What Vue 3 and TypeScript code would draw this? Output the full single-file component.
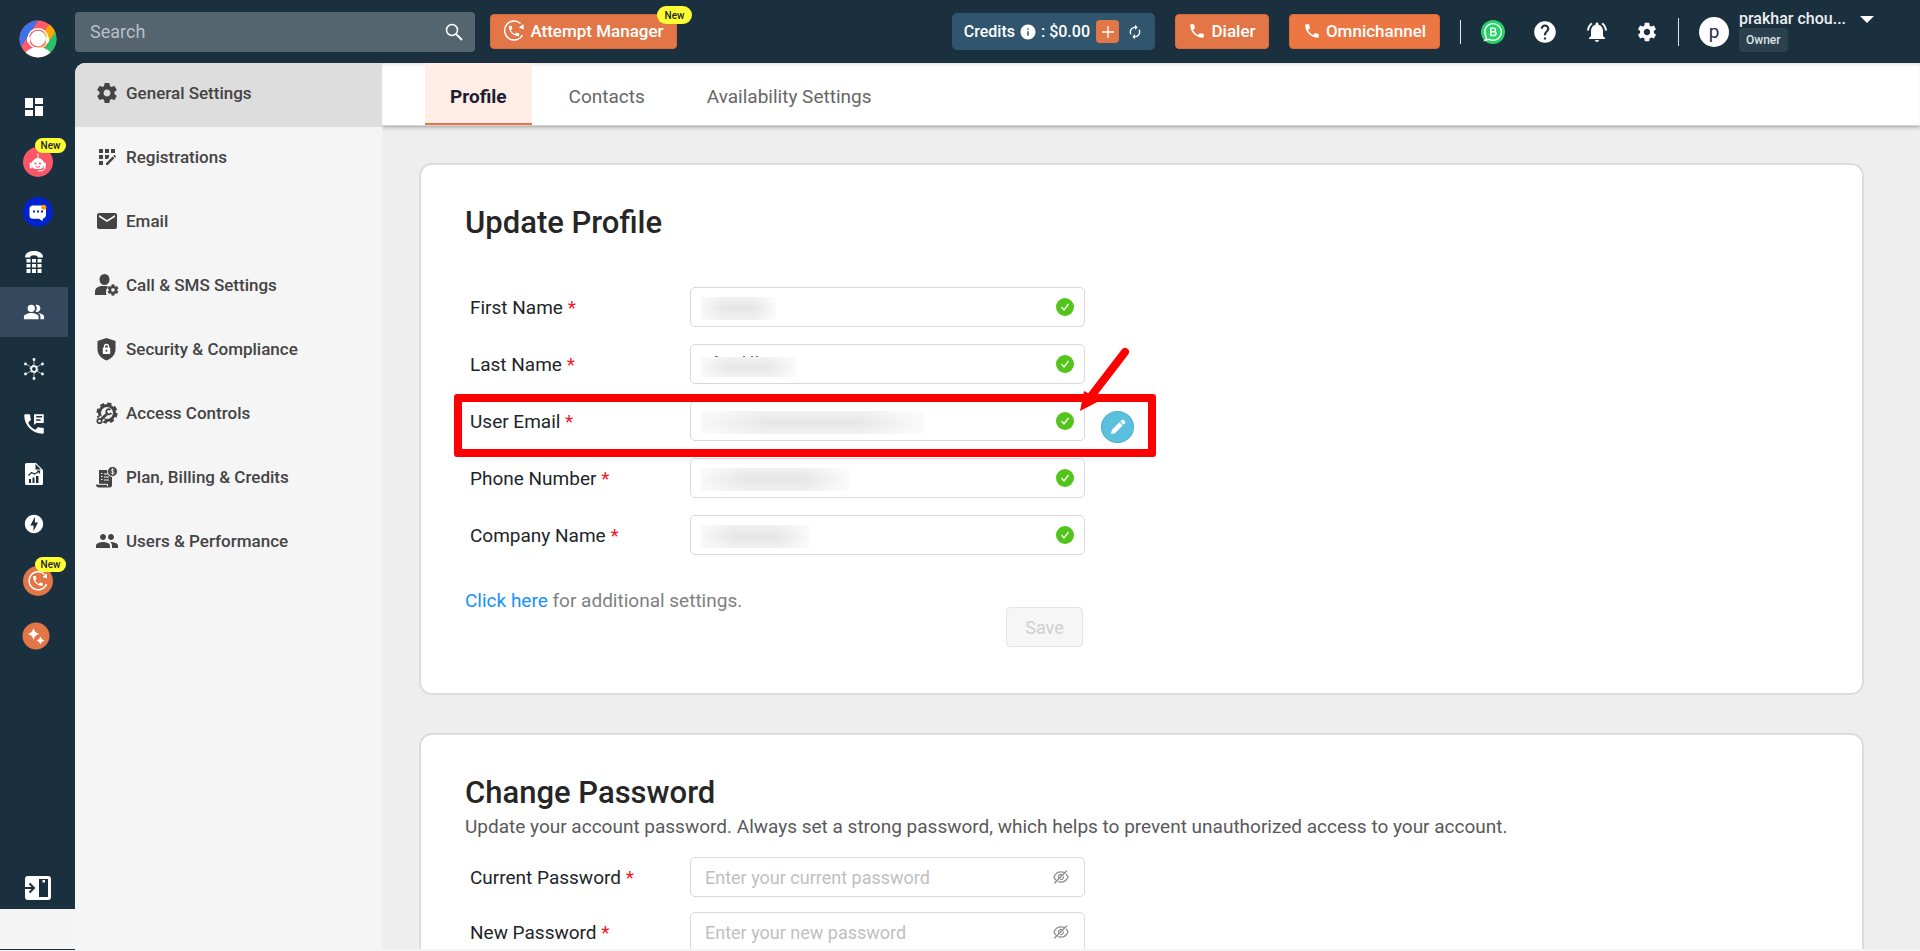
<script setup lang="ts">
import { ref } from 'vue'

interface RailItem { id: string; label: string; gap?: 's' | 'l'; badge?: boolean; active?: boolean }
interface Field { id: string; label: string; smudge: string; editable?: boolean }

const icons: Record<string, string> = {
  dashboard: 'M3 13h8V3H3v10zm0 8h8v-6H3v6zm10 0h8V11h-8v10zm0-18v6h8V3h-8z',
  bolt: 'M12 2.02c-5.51 0-9.98 4.47-9.98 9.98s4.47 9.98 9.98 9.98 9.98-4.47 9.98-9.98S17.51 2.02 12 2.02zM11.48 20v-6.26H8L13 4v6.26h3.35L11.48 20z',
  people: 'M16.67 13.13C18.04 14.06 19 15.32 19 17v3h4v-3c0-2.18-3.57-3.47-6.33-3.87zM15 12c2.21 0 4-1.79 4-4s-1.79-4-4-4c-.47 0-.91.1-1.33.24C14.5 5.27 15 6.58 15 8s-.5 2.73-1.33 3.76c.42.14.86.24 1.33.24zM9 4a4 4 0 100 8 4 4 0 000-8zM9 13c-2.67 0-8 1.34-8 4v3h16v-3c0-2.66-5.33-4-8-4z',
  phoneMsg: 'M20 15.5c-1.25 0-2.45-.2-3.57-.57-.35-.11-.74-.03-1.02.24l-2.2 2.2c-2.83-1.44-5.15-3.75-6.59-6.58l2.2-2.21c.28-.27.36-.66.25-1.01C8.7 6.45 8.5 5.25 8.5 4c0-.55-.45-1-1-1H4c-.55 0-1 .45-1 1 0 9.39 7.61 17 17 17 .55 0 1-.45 1-1v-3.5c0-.55-.45-1-1-1zM12 3v10l2-2h7V3h-9zm2 1.7h5.5V6H14V4.700zm0 3h4V9h-4V7.700z',
  gear: 'M19.43 12.98c.04-.32.07-.64.07-.98s-.03-.66-.07-.98l2.110-1.65c.19-.15.24-.42.12-.64l-2-3.460c-.12-.22-.39-.3-.61-.22l-2.490 1c-.52-.4-1.080-.73-1.690-.98l-.38-2.650C14.460 2.180 14.250 2 14 2h-4c-.25 0-.46.18-.49.42l-.38 2.650c-.61.25-1.170.59-1.690.98l-2.490-1c-.23-.09-.49 0-.61.22l-2 3.460c-.13.22-.07.49.12.64l2.110 1.650c-.04.32-.07.65-.07.98s.03.66.07.98l-2.110 1.650c-.19.15-.24.42-.12.64l2 3.460c.12.22.39.3.61.22l2.490-1c.52.4 1.080.73 1.690.98l.38 2.650c.03.24.24.42.49.42h4c.25 0 .46-.18.49-.42l.38-2.650c.61-.25 1.170-.59 1.690-.98l2.490 1c.23.09.49 0 .61-.22l2-3.460c.12-.22.07-.49-.12-.64l-2.110-1.650zM12 15.500c-1.930 0-3.500-1.570-3.500-3.500s1.570-3.500 3.500-3.500 3.500 1.570 3.500 3.500-1.570 3.500-3.500 3.500z',
  registration: 'M10 4h4v4h-4zM4 16h4v4H4zM4 10h4v4H4zM4 4h4v4H4zM14 12.42V10h-4v4h2.42zM20.88 11.29l-1.17-1.17c-.16-.16-.42-.16-.58 0l-.88.88L20 12.75l.88-.88c.16-.16.16-.42 0-.58zM11 18.25V20h1.75l6.67-6.67-1.75-1.75zM16 4h4v4h-4z',
  mail: 'M20 4H4c-1.100 0-2 .9-2 2v12c0 1.100.9 2 2 2h16c1.100 0 2-.9 2-2V6c0-1.100-.9-2-2-2zm0 4l-8 5-8-5V6l8 5 8-5v2z',
  group: 'M16 11c1.660 0 2.990-1.340 2.990-3S17.660 5 16 5c-1.660 0-3 1.340-3 3s1.340 3 3 3zm-8 0c1.660 0 2.990-1.340 2.990-3S9.660 5 8 5C6.340 5 5 6.340 5 8s1.340 3 3 3zm0 2c-2.330 0-7 1.170-7 3.500V19h14v-2.500c0-2.330-4.670-3.500-7-3.500zm8 0c-.29 0-.62.02-.97.05 1.160.84 1.970 1.970 1.970 3.450V19h6v-2.500c0-2.330-4.670-3.500-7-3.500z',
  help: 'M12 2C6.48 2 2 6.48 2 12s4.480 10 10 10 10-4.480 10-10S17.520 2 12 2zm1 17h-2v-2h2v2zm2.070-7.750l-.9.92C13.450 12.900 13 13.500 13 15h-2v-.5c0-1.100.45-2.100 1.170-2.830l1.240-1.260c.37-.36.59-.86.59-1.410 0-1.100-.9-2-2-2s-2 .9-2 2H8c0-2.210 1.790-4 4-4s4 1.790 4 4c0 .88-.36 1.680-.93 2.250z',
  bell: 'M7.58 4.080L6.150 2.650C3.750 4.480 2.170 7.300 2.030 10.500h2c.15-2.650 1.510-4.970 3.550-6.420zm12.390 6.420h2c-.15-3.200-1.730-6.020-4.120-7.850l-1.420 1.430c2.020 1.450 3.390 3.770 3.540 6.420zM18 11c0-3.070-1.640-5.640-4.500-6.320V4c0-.83-.67-1.500-1.500-1.500s-1.500.67-1.500 1.500v.68C7.630 5.360 6 7.920 6 11v5l-2 2v1h16v-1l-2-2v-5zm-6 11c.14 0 .27-.01.4-.04.65-.14 1.180-.58 1.440-1.180.1-.24.15-.5.15-.78h-4c.01 1.100.9 2 2.010 2z',
  info: 'M12 2C6.48 2 2 6.48 2 12s4.480 10 10 10 10-4.480 10-10S17.520 2 12 2zm1 15h-2v-6h2v6zm0-8h-2V7h2v2z',
  call: 'M6.62 10.790c1.440 2.830 3.760 5.140 6.590 6.590l2.200-2.200c.27-.27.67-.36 1.020-.24 1.120.37 2.330.57 3.570.57.55 0 1 .45 1 1V20c0 .55-.45 1-1 1-9.390 0-17-7.610-17-17 0-.55.45-1 1-1h3.500c.55 0 1 .45 1 1 0 1.250.2 2.450.57 3.570.11.35.03.74-.25 1.020l-2.200 2.200z',
  renew: 'M12 6v3l4-4-4-4v3c-4.420 0-8 3.580-8 8 0 1.570.46 3.030 1.240 4.260L6.700 14.800c-.45-.83-.7-1.790-.7-2.800 0-3.310 2.690-6 6-6zm6.760 1.740L17.300 9.200c.44.84.7 1.790.7 2.800 0 3.310-2.690 6-6 6v-3l-4 4 4 4v-3c4.420 0 8-3.580 8-8 0-1.570-.46-3.030-1.240-4.260z',
  eyeOff: 'M942.2 486.2Q889.47 375.11 816.7 305l-50.88 50.88C807.31 395.53 843.45 447.4 874.7 512 791.5 684.2 673.4 766 512 766q-72.67 0-133.87-22.38L323 798.75Q408 838 512 838q288.3 0 430.2-300.3a60.29 60.29 0 000-51.5zm-63.57-320.64L836 122.88a8 8 0 00-11.32 0L715.31 232.2Q624.86 186 512 186q-288.3 0-430.2 300.3a60.3 60.3 0 000 51.5q56.69 119.4 136.5 191.41L112.48 835a8 8 0 000 11.31L155.17 889a8 8 0 0011.31 0l712.15-712.12a8 8 0 000-11.32zM149.3 512C232.6 339.8 350.7 258 512 258c54.54 0 104.13 9.36 149.12 28.39l-70.3 70.3a176 176 0 00-238.13 238.13l-83.42 83.42C223.1 637.49 183.3 582.28 149.3 512zm246.7 0a112.11 112.11 0 01146.2-106.69L401.31 546.2A112 112 0 01396 512zM508 624c-3.46 0-6.87-.16-10.25-.47l-52.82 52.82a176.09 176.09 0 00227.42-227.42l-52.82 52.82c.31 3.38.47 6.79.47 10.25a111.94 111.94 0 01-112 112z',
}

const rail: RailItem[] = [
  { id: 'dashboard', label: 'Dashboard' },
  { id: 'robot', label: 'AI agent', gap: 's', badge: true },
  { id: 'chat', label: 'Chat' },
  { id: 'keypad', label: 'Numbers' },
  { id: 'people', label: 'Users', active: true },
  { id: 'hub', label: 'Integrations', gap: 'l' },
  { id: 'phoneMsg', label: 'Call logs', gap: 's' },
  { id: 'report', label: 'Reports' },
  { id: 'bolt', label: 'Automation' },
  { id: 'attempt', label: 'Attempt manager', gap: 'l', badge: true },
  { id: 'sparkle', label: 'AI tools', gap: 's' },
]

const glyphSize: Record<string, number> = { dashboard: 24, phoneMsg: 26 }

const menu = [
  { id: 'gear', label: 'General Settings' },
  { id: 'registration', label: 'Registrations' },
  { id: 'mail', label: 'Email' },
  { id: 'userGear', label: 'Call & SMS Settings' },
  { id: 'shield', label: 'Security & Compliance' },
  { id: 'access', label: 'Access Controls' },
  { id: 'billing', label: 'Plan, Billing & Credits' },
  { id: 'group', label: 'Users & Performance' },
]

const tabs = ['Profile', 'Contacts', 'Availability Settings']
const activeTab = ref('Profile')

const fields: Field[] = [
  { id: 'first', label: 'First Name', smudge: 'w75' },
  { id: 'last', label: 'Last Name', smudge: 'w95' },
  { id: 'email', label: 'User Email', smudge: 'w223', editable: true },
  { id: 'phone', label: 'Phone Number', smudge: 'w148' },
  { id: 'company', label: 'Company Name', smudge: 'w109' },
]

const passwords = [
  { id: 'current', label: 'Current Password', hint: 'Enter your current password' },
  { id: 'new', label: 'New Password', hint: 'Enter your new password' },
]
</script>

<template>
  <div class="app">
    <aside class="side">
      <nav class="rail" aria-label="Main">
        <a class="logo" href="#" aria-label="Home">
          <svg width="38" height="38" viewBox="0 0 38 38">
            <defs><clipPath id="disc"><circle cx="19" cy="19" r="18.500" /></clipPath></defs>
            <g clip-path="url(#disc)">
              <rect width="38" height="38" fill="#ff5a68" />
              <path d="M0 0h19.500L0 30z" fill="#3d74ea" />
              <path d="M32 2L22 16l6 9 12-14z" fill="#ffa800" />
              <path d="M38 9L23 32l15 6z" fill="#27c26c" />
              <ellipse cx="19" cy="36" rx="13.500" ry="9" fill="#fff" />
              <circle cx="19" cy="18.500" r="9.800" fill="none" stroke="#fff" stroke-width="1.500" />
              <rect x="8" y="16.500" width="3" height="6" rx="1.500" fill="#fff" />
              <rect x="27" y="16.500" width="3" height="6" rx="1.500" fill="#fff" />
              <circle cx="19" cy="18.500" r="7.800" fill="#fff" />
              <path d="M18 27q8 1 9-4" fill="none" stroke="#ffb84a" stroke-width="1" />
            </g>
          </svg>
        </a>
        <a
          v-for="item in rail"
          :key="item.id"
          href="#"
          class="rail-item"
          :class="[item.gap ? 'gap-' + item.gap : '', { active: item.active }]"
          :aria-label="item.label"
        >
          <svg v-if="item.id === 'robot'" class="wide" width="30" height="30" viewBox="0 0 30 30">
            <circle cx="15" cy="15" r="15" fill="#fb5769" />
            <path d="M15 6.500v5M9 18a6 6.500 0 0112 0z" stroke="#fff" fill="#fff" />
            <rect x="8.800" y="13" width="11.800" height="9" rx="4" fill="#fff" />
            <rect x="6.800" y="15.500" width="2" height="6" rx="1" fill="#fff" />
            <rect x="20.700" y="15.500" width="2" height="6" rx="1" fill="#fff" />
            <circle cx="12.500" cy="16.500" r="1.100" fill="#fb5769" />
            <circle cx="17" cy="16.500" r="1.100" fill="#fb5769" />
            <path d="M12.500 19.500q2.300 1.500 4.500 0" stroke="#fb5769" fill="none" />
            <path d="M21.800 21q0 3-7 3" stroke="#fff" fill="none" />
          </svg>
          <svg v-else-if="item.id === 'chat'" class="wide" width="30" height="30" viewBox="0 0 30 30">
            <circle cx="15" cy="15" r="15" fill="#0023d1" />
            <path d="M10 8.500h9a4 4 0 014 4v5a4 4 0 01-3 4l-.5 2.500-3.500-2.300h-6a3.500 3.500 0 01-3.500-3.500V12a3.500 3.500 0 013.500-3.500z" fill="#fff" />
            <path d="M10 13.500h2v2h-2zM14 13.500h2v2h-2zM18 13.500h2v2h-2z" fill="#0023d1" />
            <circle cx="20.800" cy="10.300" r="2.500" fill="#ff9d00" />
          </svg>
          <svg v-else-if="item.id === 'keypad'" class="glyph" width="18" height="22" viewBox="0 0 18 22" fill="#fff">
            <path d="M0 6.500C0 2 4 0 9 0s9 2 9 6.500H12.500V5q-3.500-1.500-7 0v1.500z" />
            <path d="M1.500 8h4v3.500h-4zM7 8h4v3.500H7zM12.500 8h4v3.500h-4zM1.500 13h4v3.500h-4zM7 13h4v3.500H7zM12.500 13h4v3.500h-4zM1.500 18h4v4h-4zM7 18h4v4H7zM12.500 18h4v4h-4z" />
          </svg>
          <svg v-else-if="item.id === 'hub'" class="glyph" width="20" height="22" viewBox="0 0 20 22" fill="#fff" stroke="#fff">
            <path d="M10 2v5M10 15v5M2 6l5 3M13 13l5 3M18 6l-5 3M2 16l5-3" stroke-width=".6" />
            <circle cx="10" cy="11" r="2.800" fill="none" stroke-width="1.800" />
            <circle cx="10" cy="11" r="3.900" fill="none" stroke-width="1" stroke-dasharray="1.500 2.580" />
            <g stroke="none">
              <circle cx="10" cy="1.500" r="1.400" /><circle cx="10" cy="20.500" r="1.400" />
              <circle cx="1.500" cy="6" r="1.400" /><circle cx="18.500" cy="6" r="1.400" />
              <circle cx="1.500" cy="16" r="1.400" /><circle cx="18.500" cy="16" r="1.400" />
            </g>
          </svg>
          <svg v-else-if="item.id === 'report'" class="glyph" width="18" height="22" viewBox="0 0 18 22">
            <path d="M1.500 0H11l7 7v13.500a1.500 1.500 0 01-1.500 1.500h-15A1.500 1.500 0 010 20.500v-19A1.500 1.500 0 011.500 0z" fill="#fff" />
            <path d="M10.500 1v5.500H16zM4 16h2v4H4zM7.500 14.500h2V20h-2zM11 13h2.500v7H11z" fill="#1b303e" />
            <path d="M3.500 12.500l3-3 3 1.500L14 8.500M12 8h2.500v2.500" fill="none" stroke="#1b303e" stroke-width="1.200" />
          </svg>
          <svg v-else-if="item.id === 'attempt'" class="wide" width="30" height="30" viewBox="0 0 30 30">
            <circle cx="15" cy="15" r="15" fill="#e27646" />
            <path d="M21.500 8.500A9 9 0 1023.500 18" fill="none" stroke="#fff" stroke-width="1.500" />
            <path d="M23.800 7.500l.2 5-4.500-1.500z" fill="#fff" />
            <path transform="translate(8.500 8.500) scale(.54)" :d="icons.call" fill="#fff" />
          </svg>
          <svg v-else-if="item.id === 'sparkle'" width="28" height="28" viewBox="0 0 28 28">
            <circle cx="14" cy="14" r="13.500" fill="#e27646" />
            <path d="M11.500 6q1 5 6 6-5 1-6 6-1-5-6-6 5-1 6-6zM18.500 14.500q.8 3.200 4 4-3.200.8-4 4-.8-3.200-4-4 3.200-.8 4-4z" fill="#fff" />
          </svg>
          <svg v-else class="glyph" :width="glyphSize[item.id] ?? 22" :height="glyphSize[item.id] ?? 22" viewBox="0 0 24 24" fill="#fff">
            <path :d="icons[item.id]" />
          </svg>
          <span v-if="item.badge" class="badge rail-badge">New</span>
        </a>
        <button class="collapse" type="button" aria-label="Open panel">
          <svg width="26" height="24" viewBox="0 0 26 24">
            <rect width="26" height="24" rx="3" fill="#fff" />
            <path d="M14 3h9v18h-9z" fill="#1b303e" />
            <path d="M17.500 4h2.500v2.500h-2.500z" fill="#fff" />
            <path d="M0 12h9M4.500 7.500L9 12l-4.500 4.500" fill="none" stroke="#1b303e" stroke-width="2" />
          </svg>
        </button>
      </nav>
      <div class="side-foot"></div>
    </aside>

    <div class="main">
      <header class="top">
        <label class="search">
          <input type="search" placeholder="Search" aria-label="Search" />
          <svg width="18" height="18" viewBox="0 0 18 18" fill="none" stroke="#fff">
            <circle cx="7" cy="7" r="5.500" stroke-width="1.500" />
            <path d="M11 11l6 6" stroke-width="1.800" />
          </svg>
        </label>
        <button class="btn attempt" type="button">
          <svg width="22" height="22" viewBox="0 0 22 22">
            <path d="M17.500 3.500A9.500 9.500 0 1019.500 15" fill="none" stroke="#fff" stroke-width="1.500" />
            <path d="M20.500 4l.3 5.500-5-2z" fill="#fff" />
            <path transform="translate(4 4) scale(.58)" :d="icons.call" fill="#fff" />
          </svg>
          Attempt Manager
          <span class="badge top-badge">New</span>
        </button>
        <div class="tools">
          <div class="credits">
            <span>Credits</span>
            <svg width="18" height="18" viewBox="0 0 24 24" fill="#fff"><path :d="icons.info" /></svg>
            <span>: $0.00</span>
            <button class="plus" type="button" aria-label="Add credits">
              <svg width="12" height="12" viewBox="0 0 12 12" stroke="#fff" stroke-width="1.300"><path d="M6 0v12M0 6h12" /></svg>
            </button>
            <button class="plain" type="button" aria-label="Refresh credits">
              <svg width="16" height="16" viewBox="0 0 24 24" fill="#fff"><path :d="icons.renew" /></svg>
            </button>
          </div>
          <button class="btn dialer" type="button">
            <svg width="18" height="18" viewBox="0 0 24 24" fill="#fff"><path :d="icons.call" /></svg>Dialer
          </button>
          <button class="btn omni" type="button">
            <svg width="18" height="18" viewBox="0 0 24 24" fill="#fff"><path :d="icons.call" /></svg>Omnichannel
          </button>
          <i class="rule"></i>
          <div class="actions">
            <button class="plain" type="button" aria-label="WhatsApp">
              <svg width="24" height="24" viewBox="0 0 24 24">
                <circle cx="12" cy="12" r="12" fill="#25d366" />
                <path d="M5.500 18.500L4 20.300l4.200-1A8.300 8.300 0 104.800 16z" fill="none" stroke="#fff" stroke-width="1.400" />
                <path d="M9.800 8.300h3a1.600 1.600 0 010 3.400h-3zm0 3.400h3.300a1.800 1.800 0 010 3.800H9.800z" fill="none" stroke="#fff" stroke-width="1.500" />
              </svg>
            </button>
            <button class="plain" type="button" aria-label="Help">
              <svg width="26" height="26" viewBox="0 0 24 24" fill="#fff"><path :d="icons.help" /></svg>
            </button>
            <button class="plain" type="button" aria-label="Notifications">
              <svg width="24" height="24" viewBox="0 0 24 24" fill="#fff"><path :d="icons.bell" /></svg>
            </button>
            <button class="plain" type="button" aria-label="Settings">
              <svg width="22" height="22" viewBox="0 0 24 24" fill="#fff"><path :d="icons.gear" /></svg>
            </button>
          </div>
          <i class="rule tall"></i>
          <span class="avatar">p</span>
          <div class="who">
            <span class="name">prakhar chou...</span>
            <span class="role">Owner</span>
          </div>
          <button class="plain caret" type="button" aria-label="Account menu">
            <svg width="14" height="8" viewBox="0 0 14 8" fill="#fff"><path d="M0 0h14L7 7z" /></svg>
          </button>
        </div>
      </header>

      <div class="body">
        <nav class="menu" aria-label="Settings">
          <a v-for="(item, i) in menu" :key="item.id" href="#" class="menu-item" :class="{ active: i === 0 }">
            <svg v-if="item.id === 'userGear'" width="24" height="24" viewBox="0 0 24 24" fill="#444">
              <ellipse cx="9.500" cy="6.500" rx="5" ry="5.500" />
              <path d="M0 22v-3.500Q0 14 6 13h5q1.500 0 2 1-3 3-1.500 8z" />
              <g transform="translate(11.500 10.500) scale(.54)"><path :d="icons.gear" stroke="#444" stroke-width=".5" /></g>
            </svg>
            <svg v-else-if="item.id === 'shield'" width="24" height="24" viewBox="0 0 24 24">
              <path d="M11.500 1l9 3v8c0 6-4 9.500-9 11.500-5-2-9-5.500-9-11.500V4z" fill="#444" />
              <path d="M9.500 11V9.500a2 2 0 014 0V11" fill="none" stroke="#fff" stroke-width="1.300" />
              <rect x="7.800" y="10.500" width="7.400" height="6.500" rx=".8" fill="#fff" />
              <circle cx="11.500" cy="13.700" r="1" fill="#444" />
            </svg>
            <svg v-else-if="item.id === 'access'" width="24" height="24" viewBox="0 0 24 24" fill="none" stroke="#444">
              <circle cx="12" cy="12" r="7.500" stroke-width="3" />
              <circle cx="12" cy="12" r="9.300" stroke-width="2.600" stroke-dasharray="4.200 3.104" />
              <path d="M4.500 20L8 16.700" stroke="#f5f5f5" stroke-width="6" />
              <path d="M5.500 19L13 12" stroke-width="2.800" />
              <path d="M15.500 8.800a2.600 2.600 0 10.700 3" stroke-width="1.800" />
              <circle cx="4.500" cy="20" r="2.200" stroke-width="1.800" fill="#f5f5f5" />
            </svg>
            <svg v-else-if="item.id === 'billing'" width="24" height="24" viewBox="0 0 24 24">
              <path d="M4 5h13v15a2.500 2.500 0 01-2.500 2.500H4A3 3 0 011 19.500h3zM1 19.500h11.500v1.500" fill="#444" />
              <path d="M6 8.500h1.500M6 11.500h1.500M6 14.500h1.500M9 9h4M9 12h5M9 15h5M3 19.300h9.500v2" fill="none" stroke="#f5f5f5" />
              <circle cx="17.500" cy="6.500" r="5" fill="#444" stroke="#f5f5f5" />
              <path d="M19.300 5q-3-1.300-3.300.3c0 1.500 3.200.8 3.200 2.400-.2 1.600-3 .9-3.500.1M17.500 3v7" fill="none" stroke="#f5f5f5" stroke-width=".8" />
            </svg>
            <svg v-else width="24" height="24" viewBox="0 0 24 24" fill="#444"><path :d="icons[item.id]" /></svg>
            {{ item.label }}
          </a>
        </nav>

        <main class="content">
          <div class="tabs" role="tablist">
            <button
              v-for="tab in tabs"
              :key="tab"
              type="button"
              role="tab"
              class="tab"
              :class="{ active: tab === activeTab }"
              :aria-selected="tab === activeTab"
              @click="activeTab = tab"
            >{{ tab }}</button>
          </div>

          <div class="cards">
            <section class="card">
              <h2>Update Profile</h2>
              <form class="fields profile" @submit.prevent>
                <div v-for="field in fields" :key="field.id" class="row">
                  <label :for="field.id">{{ field.label }} <b>*</b></label>
                  <div class="box">
                    <input :id="field.id" type="text" />
                    <svg v-if="field.id === 'last'" class="specks" width="50" height="2" viewBox="0 0 50 2" fill="#777">
                      <path d="M0 0h3v1H0zM28 0h2v2h-2zM36 0h2v2h-2zM41 0h2v2h-2z" />
                    </svg>
                    <span class="smudge" :class="field.smudge"></span>
                    <svg class="tick" width="18" height="18" viewBox="0 0 18 18">
                      <circle cx="9" cy="9" r="9" fill="#52c41a" />
                      <path d="M5.500 9l2.500 3 4.500-6" fill="none" stroke="#fff" stroke-width="1.300" />
                    </svg>
                  </div>
                  <button v-if="field.editable" class="edit" type="button" aria-label="Edit user email">
                    <svg width="16" height="16" viewBox="0 0 16 16" fill="#fff">
                      <path d="M1 15l.8-4L9.500 3.300l3.200 3.200L5 14.200zM10.300 2.500l1.500-1.500q1-.8 2 0l1.200 1.200q.8 1 0 2l-1.500 1.500z" />
                    </svg>
                  </button>
                  <template v-if="field.editable">
                    <span class="highlight"></span>
                    <svg class="arrow" width="54" height="70" viewBox="0 0 54 70">
                      <path d="M47 8L14 51" stroke="#f00" stroke-width="8" stroke-linecap="round" />
                      <path d="M2 67L6 47l17 9z" fill="#f00" />
                    </svg>
                  </template>
                </div>
              </form>
              <p class="more"><a href="#">Click here</a> for additional settings.</p>
              <div class="save-row"><button class="save" type="button" disabled>Save</button></div>
            </section>

            <section class="card">
              <h2>Change Password</h2>
              <p class="lead">Update your account password. Always set a strong password, which helps to prevent unauthorized access to your account.</p>
              <form class="fields password" @submit.prevent>
                <div v-for="field in passwords" :key="field.id" class="row">
                  <label :for="field.id">{{ field.label }} <b>*</b></label>
                  <div class="box">
                    <input :id="field.id" type="password" :placeholder="field.hint" />
                    <svg class="eye" width="18" height="18" viewBox="0 0 1024 1024" fill="#8c8c8c"><path :d="icons.eyeOff" /></svg>
                  </div>
                </div>
              </form>
            </section>
          </div>
        </main>
      </div>
    </div>
  </div>
</template>

<style>
body { margin: 0; overflow: hidden; background: #f4f4f4; }
</style>

<style scoped>
* { box-sizing: border-box; }
.app { display: flex; height: 100vh; overflow: hidden; font-family: Roboto, "Liberation Sans", sans-serif; font-size: 19px; color: #212529; background: #1b303e; }
a { text-decoration: none; color: inherit; }
button { font-family: inherit; cursor: pointer; }
svg { flex: none; display: block; }
.plain { display: flex; padding: 0; border: 0; background: none; }

.side { display: flex; flex-direction: column; flex: 0 0 75px; background: #f4f4f4; border-bottom: 1px solid #f4f4f4; }
.rail { flex: 1; min-height: 0; display: flex; flex-direction: column; background: #1b303e; }
.side-foot { flex: none; height: 41px; border-bottom: 1px solid #1b303e; }
.logo { height: 82px; padding: 20px 0 0 19px; }
.rail-item { position: relative; display: flex; align-items: center; justify-content: center; width: 68px; height: 50px; }
.rail-item.gap-s { margin-top: 5px; }
.rail-item.gap-l { margin-top: 7px; }
.rail-item.active { background: #34495e; }
.rail-item .wide { margin-left: 8px; }
.rail-item > svg:not(.glyph):not(.wide) { margin-left: 4px; }
.badge { position: absolute; display: flex; align-items: center; justify-content: center; border-radius: 9px; background: #ffff33; color: #222; font-weight: 500; font-size: 10px; }
.rail-badge { top: 1px; left: 35px; width: 31px; height: 15px; }
.collapse { display: flex; margin-top: auto; padding: 0 0 9px 25px; border: 0; background: none; }

.main { flex: 1; min-width: 0; display: flex; flex-direction: column; border-bottom: 2px solid #f4f4f4; }
.top { display: flex; align-items: center; height: 63px; flex: none; padding-right: 46px; color: #fff; }
.search { display: flex; align-items: center; width: 400px; height: 40px; padding: 0 12px 0 15px; border-radius: 4px; background: #54656f; }
.search input { flex: 1; min-width: 0; padding: 0; border: 0; outline: 0; background: none; color: #fff; font: 18px Roboto, sans-serif; }
.search input::placeholder { color: #b9bfc3; opacity: 1; }
.btn { position: relative; display: flex; align-items: center; justify-content: center; gap: 5px; height: 35px; padding: 0 0 2px; border: 1px solid #d96c3c; border-radius: 4px; background: #e27646; color: #fff; font-size: 17px; font-weight: 500; white-space: nowrap; }
.attempt { width: 187px; margin-left: 15px; }
.top-badge { top: -9px; right: -16px; width: 35px; height: 18px; }
.tools { display: flex; align-items: center; margin-left: auto; }
.credits { display: flex; align-items: center; gap: 4px; height: 37px; padding: 0 12px; border-radius: 5px; background: #30556d; font-size: 16px; font-weight: 500; white-space: nowrap; }
.plus { display: flex; align-items: center; justify-content: center; width: 23px; height: 23px; margin: 0 4px 0 2px; padding: 0; border: 0; border-radius: 4px; background: #e27646; }
.dialer { width: 94px; margin-left: 20px; }
.omni { width: 151px; margin-left: 20px; background: #ec7742; }
.rule { width: 1px; height: 24px; margin: 0 20px; background: #e3e6e8; }
.rule.tall { height: 28px; }
.actions { display: flex; align-items: center; gap: 27px; }
.avatar { display: flex; align-items: center; justify-content: center; width: 30px; height: 30px; border-radius: 50%; background: #fff; color: #2c2c44; font-size: 19px; }
.who { display: flex; flex-direction: column; align-items: flex-start; width: 106px; margin: 0 15px 0 10px; padding-bottom: 2px; }
.name { white-space: nowrap; font-size: 16px; line-height: 18px; font-weight: 500; color: #eceff0; }
.role { height: 24px; padding: 0 7px; border-radius: 4px; background: #2b414d; font-size: 12px; line-height: 24px; font-weight: 500; color: #dfe3e5; }
.caret { align-self: flex-start; padding-top: 6px; }

.body { flex: 1; min-height: 0; display: flex; }
.menu { flex: 0 0 307px; overflow: hidden; border-top-left-radius: 10px; background: #f5f5f5; }
.menu-item { display: flex; align-items: center; gap: 7px; height: 64px; padding: 0 20px 4px 20px; font-size: 17px; font-weight: 500; color: #444; }
.menu-item.active { background: #ddd; }
.content { flex: 1; min-width: 0; display: flex; flex-direction: column; background: #eee; overflow: hidden; }
.tabs { position: relative; display: flex; flex: none; gap: 12px; height: 63px; padding-left: 43px; background: #fff; border-bottom: 1px solid #d4d4d4; box-shadow: 0 1px 4px rgba(0, 0, 0, .35), inset 0 3px 4px -2px rgba(0, 0, 0, .15); }
.tab { padding: 6px 25px 0; border: 0; border-bottom: 2px solid transparent; background: none; color: #666; font-size: 19px; }
.tab.active { border-bottom-color: #e27646; background: #ffede6; color: #1b1e33; font-weight: 700; }

.cards { flex: 1; min-height: 0; display: flex; flex-direction: column; gap: 38px; padding: 37px 56px 0 37px; overflow: hidden; }
.card { flex: none; padding: 40px 44px 46px; border: 2px solid #dcdcdc; border-radius: 13px; background: #fff; }
h2 { margin: 0; font-size: 31px; line-height: 36px; font-weight: 500; color: #262626; }
.fields { display: flex; flex-direction: column; padding-left: 5px; }
.profile { gap: 17px; margin-top: 46px; }
.password { gap: 15px; margin-top: 18px; }
.row { position: relative; display: flex; align-items: center; height: 40px; }
.row label { flex: 0 0 220px; }
.row b { color: #f5151f; font-weight: 400; }
.box { position: relative; width: 395px; }
.box input { display: block; width: 100%; height: 40px; padding: 0 45px 0 14px; border: 1px solid #d9d9d9; border-radius: 5px; outline: 0; background: #fff; color: #333; font: 18px Roboto, sans-serif; }
.box input::placeholder { color: #bfbfbf; opacity: 1; }
.tick { position: absolute; top: 11px; right: 11px; }
.eye { position: absolute; top: 11px; right: 15px; }
.smudge { position: absolute; top: 10px; left: 11px; height: 23px; background: linear-gradient(90deg, rgba(255, 255, 255, .7), transparent 30%, transparent 70%, rgba(255, 255, 255, .8)), linear-gradient(#f1f1f1, #e6e6e6 50%, #f1f1f1); }
.w75 { width: 75px; }
.w95 { top: 13px; width: 95px; height: 20px; }
.w223 { width: 223px; }
.w148 { width: 148px; }
.w109 { width: 109px; }
.specks { position: absolute; top: 12px; left: 25px; }
.edit { display: flex; align-items: center; justify-content: center; width: 33px; height: 32px; margin: 12px 0 0 16px; padding: 0; border: 1px solid #4aafd0; border-radius: 50%; background: #5bc0de; }
.highlight { position: absolute; top: -7px; left: -16px; width: 702px; height: 63px; border: 8px solid #f00; border-radius: 3px; pointer-events: none; }
.arrow { position: absolute; top: -57px; left: 608px; pointer-events: none; }
.more { margin: 36px 0 0; line-height: 20px; color: #7f7f7f; }
.more a { color: #1890ff; }
.save-row { display: flex; justify-content: flex-end; width: 618px; }
.save { width: 77px; height: 40px; margin-top: -4px; border: 1px solid #e4e4e4; border-radius: 4px; background: #f6f6f6; color: #cfcfcf; font-size: 18px; }
.lead { margin: 4px 0 0; line-height: 24px; color: #595959; }
</style>
